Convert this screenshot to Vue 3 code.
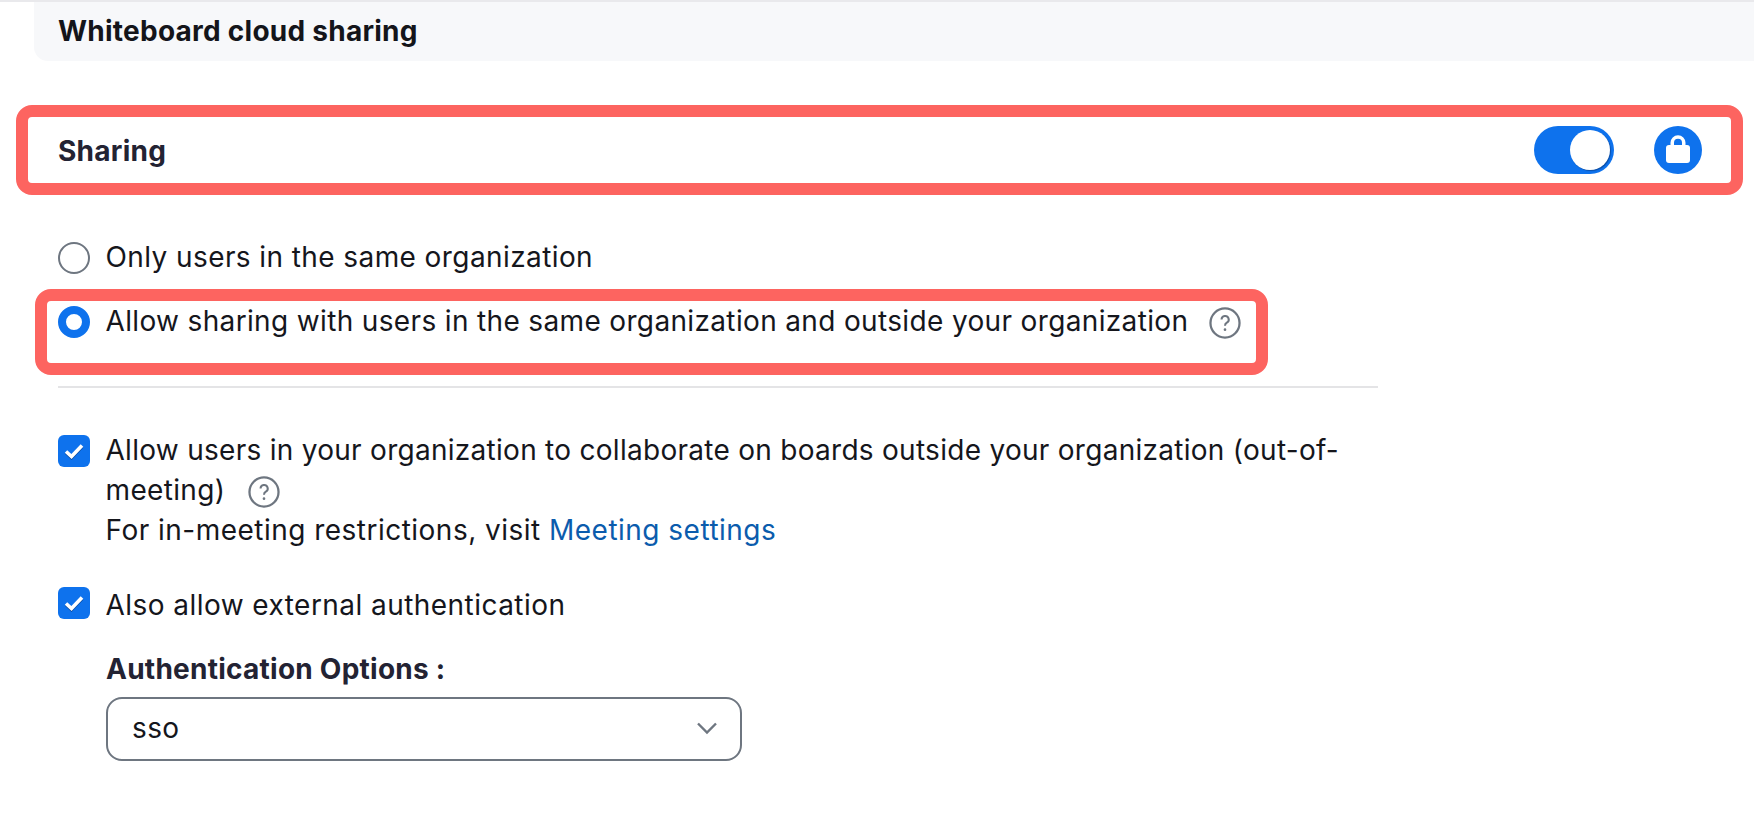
<script setup>
const Q = 'M9.4 9.4a2.7 2.7 0 1 1 4 2.4c-.9.5-1.4 1.1-1.4 2.2'
</script>

<template>
  <div class="page">
    <div class="top-line"></div>
    <div class="section-head">Whiteboard cloud sharing</div>

    <div class="sharing-row">
      <span class="sharing-title">Sharing</span>
      <span class="toggle"><span class="knob"></span></span>
      <span class="lock">
        <svg width="30" height="32" viewBox="0 0 30 32" aria-hidden="true">
          <path d="M9.25 13V8.75a5.75 5.75 0 0 1 11.5 0V13" fill="none" stroke="#fff" stroke-width="3.5" />
          <rect x="3" y="11" width="24" height="18" rx="3" fill="#fff" />
        </svg>
      </span>
    </div>

    <div class="options">
      <label class="option first">
        <span class="radio"></span>
        <span class="only-text">Only users in the same organization</span>
      </label>
      <div class="highlight">
        <span class="radio on"></span>
        <span class="highlight-text">Allow sharing with users in the same organization and outside your organization</span>
        <svg class="help help-a" width="32" height="32" viewBox="0 0 24 24" aria-hidden="true">
          <circle cx="12" cy="12" r="10.9" fill="none" stroke="#6e7680" stroke-width="1.7" />
          <path :d="Q" fill="none" stroke="#6e7680" stroke-width="1.5" />
          <circle cx="12" cy="17" r="1" fill="#6e7680" />
        </svg>
      </div>
      <div class="divider"></div>

      <div class="check-row">
        <span class="check">
          <svg width="24" height="24" viewBox="0 0 24 24" aria-hidden="true">
            <path d="M4 13.5l5.5 5L20 7.5" fill="none" stroke="#0a4a9e" stroke-width="3.6" />
            <path d="M4 12.5l5.5 5L20 6.5" fill="none" stroke="#fff" stroke-width="3.6" />
          </svg>
        </span>
        <div class="check-text shifted">
          <div class="line1">Allow users in your organization to collaborate on boards outside your organization (out-of-</div>
          <div class="line2">meeting)
            <svg class="help help-b" width="32" height="32" viewBox="0 0 24 24" aria-hidden="true">
              <circle cx="12" cy="12" r="10.9" fill="none" stroke="#6e7680" stroke-width="1.7" />
              <path :d="Q" fill="none" stroke="#6e7680" stroke-width="1.5" />
              <circle cx="12" cy="17" r="1" fill="#6e7680" />
            </svg>
          </div>
          <div class="line3">For in-meeting restrictions, visit <a class="link">Meeting settings</a></div>
        </div>
      </div>

      <div class="check-row second">
        <span class="check">
          <svg width="24" height="24" viewBox="0 0 24 24" aria-hidden="true">
            <path d="M4 13.5l5.5 5L20 7.5" fill="none" stroke="#0a4a9e" stroke-width="3.6" />
            <path d="M4 12.5l5.5 5L20 6.5" fill="none" stroke="#fff" stroke-width="3.6" />
          </svg>
        </span>
        <div class="check-text also-text">Also allow external authentication</div>
      </div>

      <div class="auth">
        <div class="auth-label">Authentication Options :</div>
        <div class="select">
          <span>sso</span>
          <svg width="22" height="14" viewBox="0 0 22 14" aria-hidden="true"><path d="M2 2.5l9 9 9-9" fill="none" stroke="#6e7680" stroke-width="2.4" /></svg>
        </div>
      </div>
    </div>
  </div>
</template>

<style>
html, body { margin: 0; background: #fff; }
</style>

<style scoped>
.page {
  width: 1754px;
  height: 836px;
  overflow: hidden;
  position: relative;
  font-family: Inter, "Liberation Sans", sans-serif;
  font-size: 28px;
  letter-spacing: 0.35px;
  color: #15161c;
  background: #fff;
}
.top-line { height: 2px; background: #e9e9ec; }
.section-head {
  margin-left: 34px;
  height: 59px;
  padding-left: 24px;
  padding-bottom: 2px;
  box-sizing: border-box;
  display: flex;
  align-items: center;
  background: #f7f8fa;
  border-bottom-left-radius: 14px;
  font-weight: 700;
  letter-spacing: 0.25px;
  color: #14151a;
}
.sharing-row {
  box-sizing: border-box;
  margin: 44px 0 0 16px;
  width: 1727px;
  height: 90px;
  border: 12px solid #fd6460;
  border-radius: 16px;
  padding: 0 29px 0 30px;
  display: flex;
  align-items: center;
}
.sharing-title { font-weight: 700; flex: 1; color: #232333; letter-spacing: 0.25px; padding-top: 2px; }
.toggle {
  width: 80px;
  height: 48px;
  border-radius: 24px;
  background: #0e72ed;
  position: relative;
  margin-right: 40px;
}
.knob {
  position: absolute;
  right: 4px;
  top: 4px;
  width: 40px;
  height: 40px;
  border-radius: 50%;
  background: #fff;
  box-shadow: 1px 1px 1px rgba(10, 50, 110, 0.55);
}
.lock {
  width: 48px;
  height: 48px;
  border-radius: 50%;
  background: #0e72ed;
  display: flex;
  align-items: center;
  justify-content: center;
}
.options { padding-left: 58px; }
.option { display: flex; align-items: center; gap: 15.5px; height: 32px; }
.option.first { margin-top: 47px; }
.only-text { letter-spacing: 0.41px; margin-top: -2px; }
.radio {
  box-sizing: border-box;
  flex: none;
  width: 32px;
  height: 32px;
  border-radius: 50%;
  border: 2px solid #6e7680;
  background: #fff;
}
.radio.on { border: 8px solid #0e72ed; }
.highlight {
  box-sizing: border-box;
  margin: 15px 0 0 -23px;
  width: 1233px;
  height: 86px;
  border: 12px solid #fd6460;
  border-radius: 16px;
  padding: 0 0 0 11px;
  display: flex;
  align-items: flex-start;
  gap: 15.5px;
}
.highlight .radio { margin-top: 5px; }
.highlight-text { line-height: 40px; white-space: nowrap; }
.help { flex: none; vertical-align: middle; }
.help-a { margin: 6px 0 0 5.5px; }
.help-b { margin-left: 14px; }
.divider { width: 1320px; height: 2px; background: #e4e4e6; margin-top: 11px; }
.check-row { display: flex; align-items: flex-start; gap: 15.5px; margin-top: 45px; line-height: 40px; }
.check-row.second { margin-top: 32px; }
.check {
  flex: none;
  width: 32px;
  height: 32px;
  border-radius: 6px;
  background: #0e72ed;
  display: flex;
  align-items: center;
  justify-content: center;
  margin-top: 2px;
}
.check-text { white-space: nowrap; }
.check-text.shifted { margin: -3px 0 3px; }
.line1 { letter-spacing: 0.28px; }
.line3 { letter-spacing: 0.48px; }
.also-text { letter-spacing: 0.45px; }
.link { color: #0b5cad; }
.auth { padding-left: 48px; margin-top: 24px; }
.auth-label { font-weight: 700; color: #232333; line-height: 40px; letter-spacing: 0.25px; }
.select {
  box-sizing: border-box;
  width: 636px;
  height: 64px;
  margin-top: 8px;
  border: 2px solid #6e7680;
  border-radius: 16px;
  padding: 0 22px 2px 24px;
  display: flex;
  align-items: center;
  justify-content: space-between;
}
</style>
